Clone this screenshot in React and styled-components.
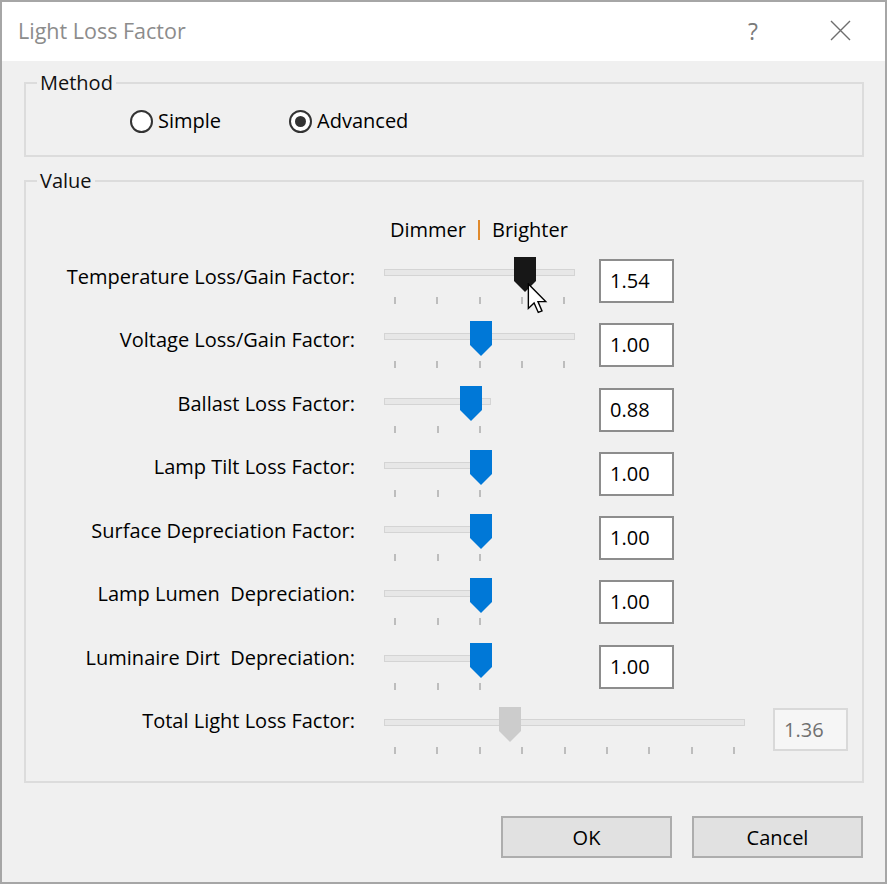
import React from "react";
import styled, { createGlobalStyle } from "styled-components";

const Global = createGlobalStyle`
  html, body { margin: 0; padding: 0; background: #f4f4f4; }
  body { font-family: "Open Sans", "Noto Sans", "Liberation Sans", sans-serif; }
  * { box-sizing: border-box; }
`;

const Window = styled.div`
  width: 887px;
  height: 884px;
  border: 2px solid #a6a6a6;
  background: #f0f0f0;
  display: flex;
  flex-direction: column;
  font-size: 20px;
  color: #000;
`;

const TitleBar = styled.div`
  height: 59px;
  background: #fff;
  display: flex;
  align-items: center;
  padding-left: 16px;
`;

const Title = styled.div`
  flex: 1;
  font-size: 21.5px;
  color: #8c8c8c;
  line-height: 26px;
  margin-top: -2px;
`;

const TitleButton = styled.div`
  width: ${(p) => p.$w}px;
  display: flex;
  justify-content: center;
  align-items: center;
  color: #7a7a7a;
  font-size: 23px;
  margin-top: -2px;
`;

const TitleSpacer = styled.span`
  width: 11px;
`;

const Body = styled.div`
  flex: 1;
  display: flex;
  flex-direction: column;
  padding: 9px 21px 0 22px;
`;

const Group = styled.fieldset`
  margin: 0;
  min-width: 0;
  border: 2px solid #dcdcdc;
  padding: ${(p) => p.$pad};
  & + & { margin-top: 11px; }
`;

const Legend = styled.legend`
  margin-left: 11px;
  padding: 0 3px;
  line-height: 26px;
  font-size: 20px;
  color: #111;
`;

const RadioRow = styled.div`
  display: flex;
  align-items: center;
  height: 24px;
  margin-top: 13px;
  padding-left: 104px;
  gap: 68px;
`;

const RadioOption = styled.label`
  display: flex;
  align-items: center;
  gap: 5px;
  line-height: 24px;
`;

const RadioCircle = styled.span`
  width: 23px;
  height: 23px;
  border-radius: 50%;
  border: 2px solid #333;
  background: #fff;
  display: flex;
  align-items: center;
  justify-content: center;
  &::after {
    content: "";
    width: 11px;
    height: 11px;
    border-radius: 50%;
    background: ${(p) => (p.$checked ? "#333" : "transparent")};
  }
`;

const HeaderRow = styled.div`
  display: flex;
  align-items: center;
  gap: 12px;
  margin-top: 23px;
  padding-left: 364px;
  line-height: 26px;
`;

const Divider = styled.span`
  width: 2px;
  height: 20px;
  background: #e08a2c;
`;

const Rows = styled.div`
  margin-top: 14px;
  display: flex;
  flex-direction: column;
`;

const Row = styled.div`
  height: 64.3px;
  display: grid;
  grid-template-columns: 329px ${(p) => p.$area}px 75px;
  align-items: start;
`;

const Label = styled.div`
  text-align: right;
  white-space: pre;
  line-height: 26px;
  margin-top: ${(p) => p.$offset}px;
`;

const SliderCell = styled.div`
  padding-left: 29px;
`;

const Slider = styled.div`
  position: relative;
  width: ${(p) => p.$w}px;
  height: 48px;
  display: flex;
  flex-direction: column;
`;

const Track = styled.div`
  margin-top: 12px;
  height: 7px;
  background: #e7e7e7;
  border: 1px solid #d4d4d4;
`;

const Ticks = styled.div`
  margin-top: 21px;
  padding: 0 10px;
  display: flex;
  justify-content: space-between;
`;

const Tick = styled.span`
  width: 2px;
  height: 7px;
  background: #bdbdbd;
`;

const Thumb = styled.svg`
  position: absolute;
  top: 0;
  width: 22px;
  height: 35px;
`;

const Cursor = styled.svg`
  position: absolute;
  left: 143px;
  top: 26px;
  width: 21px;
  height: 31px;
`;

const ValueBox = styled.div`
  margin-top: ${(p) => (p.$disabled ? 1 : 2)}px;
  width: 75px;
  height: ${(p) => (p.$disabled ? 43 : 44)}px;
  border: 2px solid ${(p) => (p.$disabled ? "#d9d9d9" : "#8d8d8d")};
  background: ${(p) => (p.$disabled ? "#f6f6f6" : "#fff")};
  color: ${(p) => (p.$disabled ? "#707070" : "#000")};
  padding-left: 9px;
  display: flex;
  align-items: center;
  line-height: 26px;
`;

const ButtonBar = styled.div`
  margin-top: 33px;
  display: flex;
  justify-content: flex-end;
  gap: 20px;
  padding-right: 1px;
`;

const Button = styled.button`
  width: 171px;
  height: 42px;
  border: 2px solid #adadad;
  background: #e1e1e1;
  font-family: inherit;
  font-size: 20px;
  color: #000;
  padding: 0;
`;

const thumbColors = { normal: "#0078d7", active: "#171717", disabled: "#cccccc" };

const rows = [
  { label: "Temperature Loss/Gain Factor:", w: 191, ticks: 5, thumb: 130, value: "1.54", state: "active", cursor: true },
  { label: "Voltage Loss/Gain Factor:", w: 191, ticks: 5, thumb: 86, value: "1.00" },
  { label: "Ballast Loss Factor:", w: 107, ticks: 3, thumb: 76, value: "0.88" },
  { label: "Lamp Tilt Loss Factor:", w: 107, ticks: 3, thumb: 86, value: "1.00" },
  { label: "Surface Depreciation Factor:", w: 107, ticks: 3, thumb: 86, value: "1.00" },
  { label: "Lamp Lumen  Depreciation:", w: 107, ticks: 3, thumb: 86, value: "1.00" },
  { label: "Luminaire Dirt  Depreciation:", w: 107, ticks: 3, thumb: 86, value: "1.00" },
  { label: "Total Light Loss Factor:", w: 361, ticks: 9, thumb: 115, value: "1.36", state: "disabled", area: 418 },
];

function SliderRow({ r, index }) {
  const state = r.state || "normal";
  return (
    <Row $area={r.area || 244}>
      <Label $offset={7 - index * 0.86}>{r.label}</Label>
      <SliderCell>
        <Slider $w={r.w}>
          <Track />
          <Ticks>
            {Array.from({ length: r.ticks }).map((_, i) => (
              <Tick key={i} />
            ))}
          </Ticks>
          <Thumb viewBox="0 0 22 35" style={{ left: r.thumb }}>
            <polygon points="0,0 22,0 22,24 11,35 0,24" fill={thumbColors[state]} />
          </Thumb>
          {r.cursor && (
            <Cursor viewBox="0 0 13 20">
              <path
                d="M0.6 0.6 L0.6 16.4 L4.3 12.9 L7 19 L9.4 18 L6.8 12 L11.8 12 Z"
                fill="#fff"
                stroke="#000"
                strokeWidth="0.9"
                strokeLinejoin="miter"
              />
            </Cursor>
          )}
        </Slider>
      </SliderCell>
      <ValueBox $disabled={state === "disabled"}>{r.value}</ValueBox>
    </Row>
  );
}

export default function App() {
  return (
    <>
      <Global />
      <Window>
        <TitleBar>
          <Title>Light Loss Factor</Title>
          <TitleButton $w={106}>?</TitleButton>
          <TitleButton $w={68}>
            <svg width="21" height="21" viewBox="0 0 21 21">
              <path d="M1 1 L20 20 M20 1 L1 20" stroke="#6e6e6e" strokeWidth="1.4" />
            </svg>
          </TitleButton>
          <TitleSpacer />
        </TitleBar>
        <Body>
          <Group $pad="0 0 22px 0">
            <Legend>Method</Legend>
            <RadioRow>
              <RadioOption>
                <RadioCircle />
                Simple
              </RadioOption>
              <RadioOption>
                <RadioCircle $checked />
                Advanced
              </RadioOption>
            </RadioRow>
          </Group>
          <Group $pad="0 0 10px 0">
            <Legend>Value</Legend>
            <HeaderRow>
              <span>Dimmer</span>
              <Divider />
              <span>Brighter</span>
            </HeaderRow>
            <Rows>
              {rows.map((r, i) => (
                <SliderRow key={r.label} r={r} index={i} />
              ))}
            </Rows>
          </Group>
          <ButtonBar>
            <Button>OK</Button>
            <Button>Cancel</Button>
          </ButtonBar>
        </Body>
      </Window>
    </>
  );
}
